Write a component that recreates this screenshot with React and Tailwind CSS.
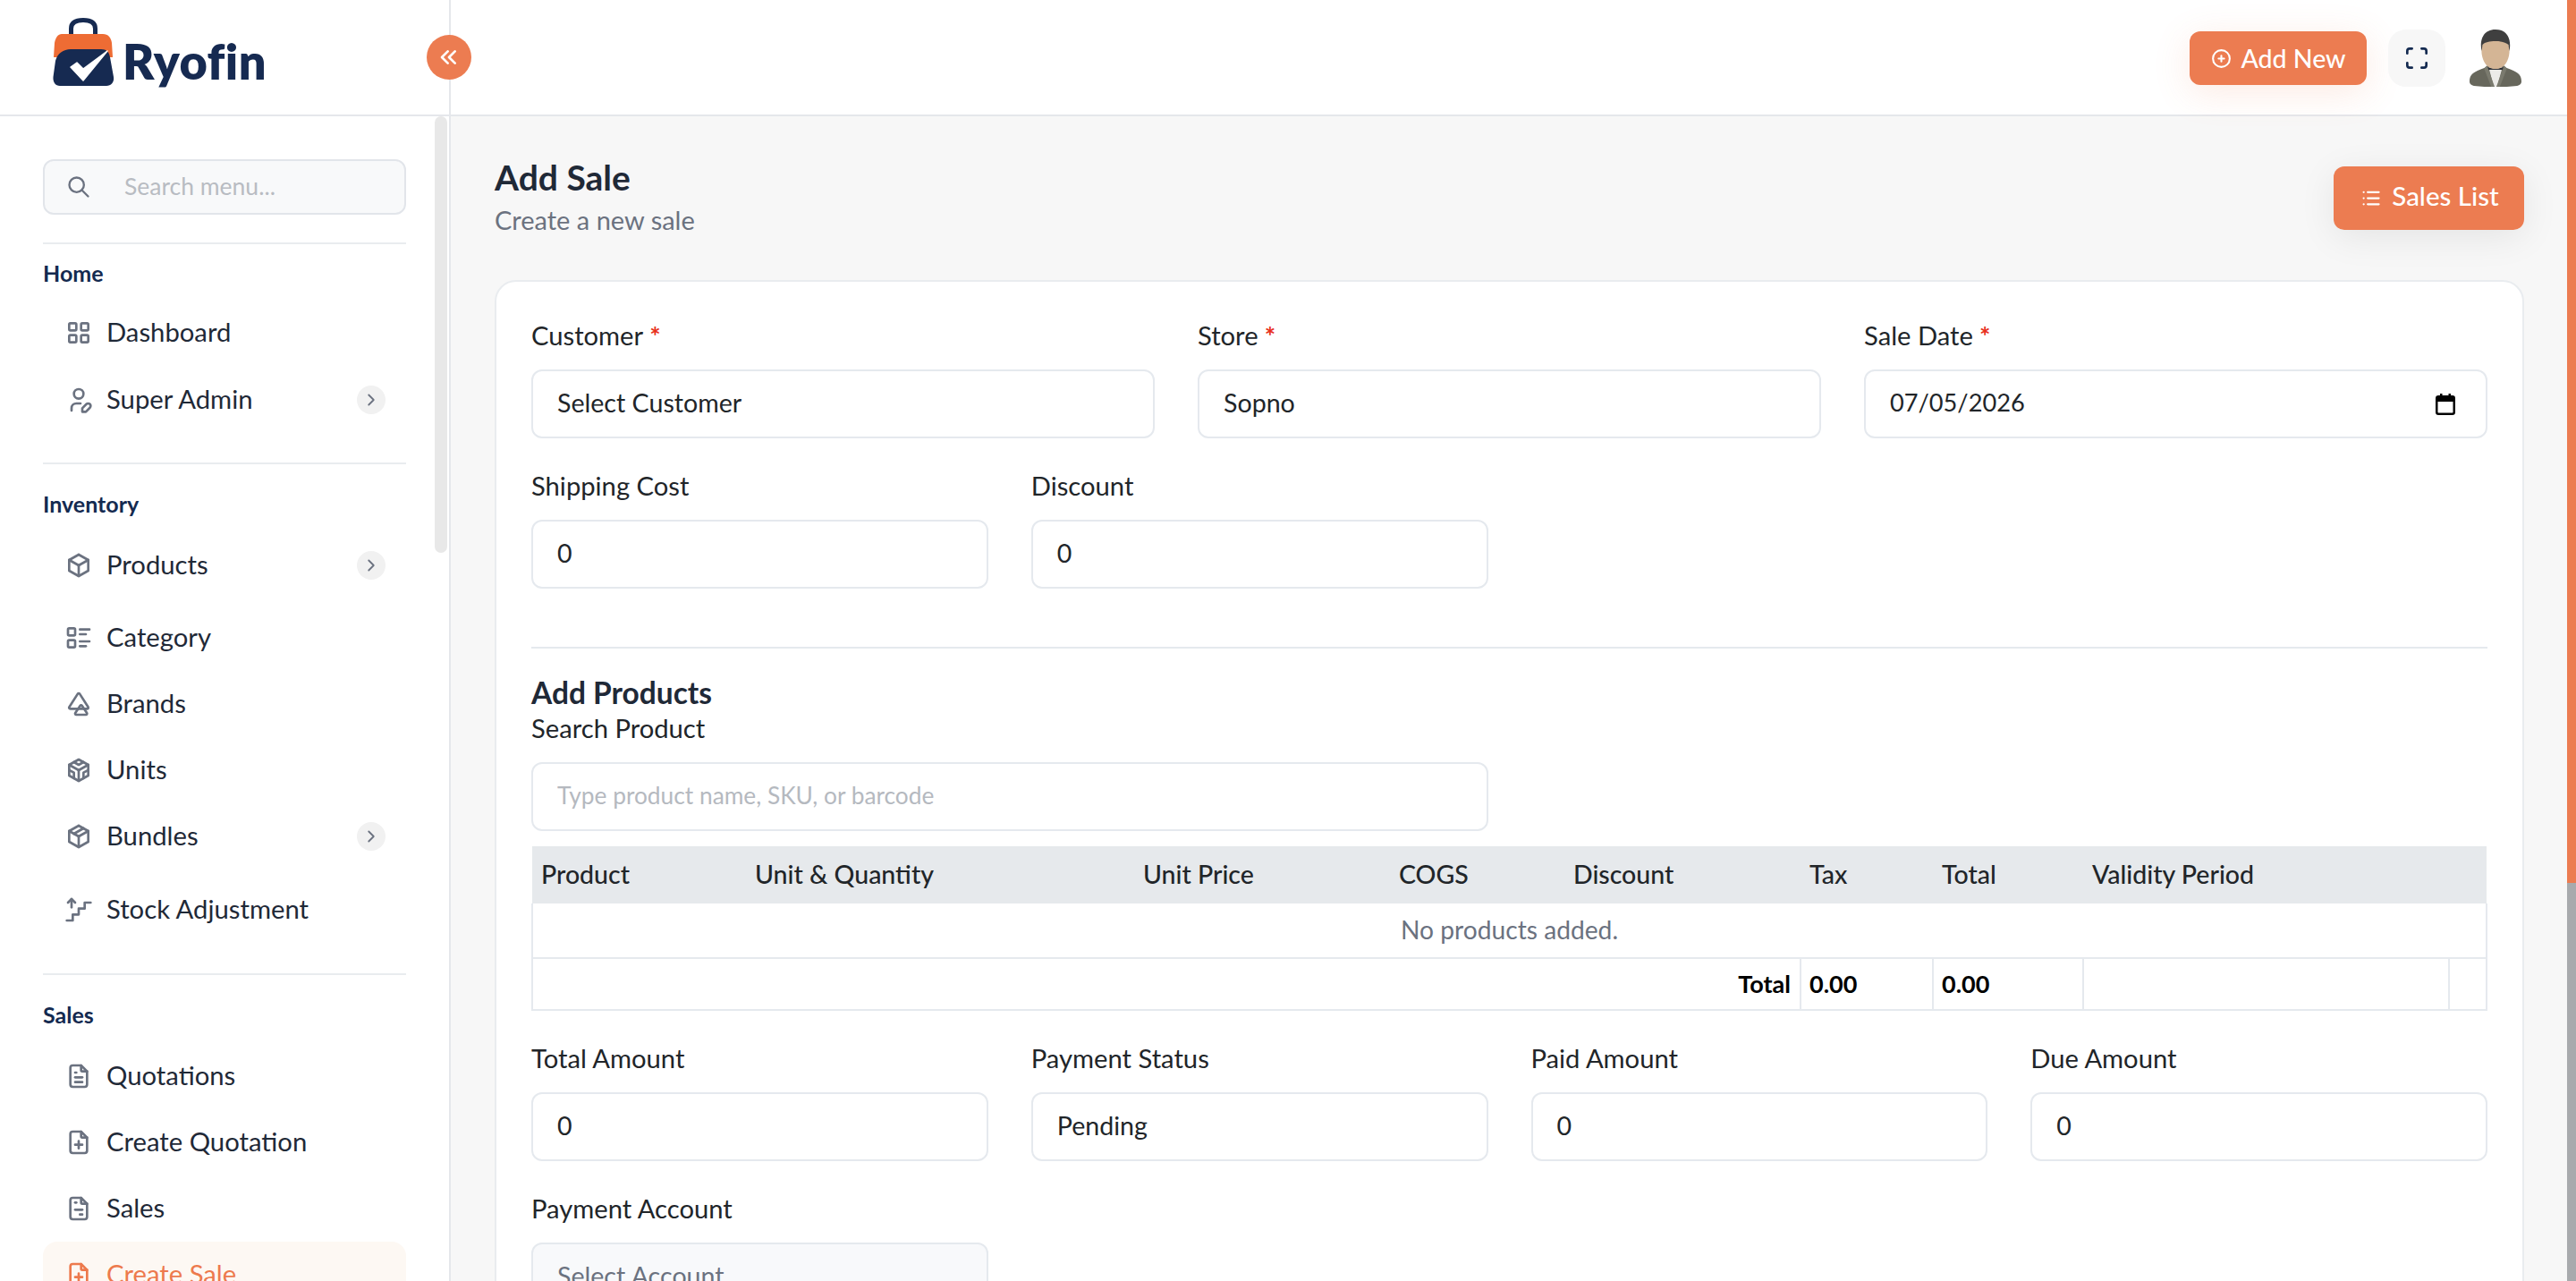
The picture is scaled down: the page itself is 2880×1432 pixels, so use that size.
import React from "react";
import {
  TbLayoutGrid, TbUserEdit, TbBox, TbListDetails, TbTriangles, TbBrandCodesandbox, TbPackage, TbStairsUp,
  TbFileText, TbFilePlus, TbFileInvoice, TbSearch, TbChevronRight, TbCirclePlus, TbList, TbMaximize, TbChevronsLeft,
} from "react-icons/tb";

function Logo() {
  return (
    <div className="flex items-start">
      <svg width="69" height="77" viewBox="0 0 69 77" className="block">
        <path d="M20.5 23V12C20.5 5 26 2.5 34 2.5C42 2.5 47.5 5 47.5 12V23" fill="none" stroke="#162a51" strokeWidth="5" />
        <path d="M10 18H56C62 18 65 22 66 28L67 44H1L2 28C3 22 6 18 10 18Z" fill="#ee6c34" />
        <path d="M0.5 66L3 48C5 40 12 35 20 35H54C60 35 63 38 64 44L68 66C69 72 65 76 60 76H8C3 76 0 72 0.5 66Z" fill="#162a51" />
        <path d="M20 55L27 50L34 57L61 37L34 70Z" fill="#fff" stroke="#fff" strokeWidth="1.5" strokeLinejoin="round" />
      </svg>
      <span className="ml-[9px] mt-[19px] text-[54px] leading-[60px] font-extrabold tracking-[0.5px] text-[#162a51]">Ryofin</span>
    </div>
  );
}

function Avatar() {
  return (
    <svg width="60" height="64" viewBox="0 0 62 64" preserveAspectRatio="none" className="block">
      <path d="M1 58C1 50 6 47 18 43L24 39H38L44 43C56 47 61 50 61 58C61 61 59 62 56 63L44 64H18L6 63C3 62 1 61 1 58Z" fill="#67675c" />
      <path d="M23 42H39L33 64H29Z" fill="#ecebe8" />
      <path d="M22 42L30 44H32L40 42V45H22Z" fill="#2f3238" />
      <path d="M21 40L30 64H26L18 44Z" fill="#7a7a6e" />
      <path d="M41 40L32 64H36L44 44Z" fill="#7a7a6e" />
      <path d="M15 20C15 9 47 9 47 20C48 30 44 44 31 44C18 44 14 30 15 20Z" fill="#d4b595" />
      <path d="M15 24C13 16 14 0 31 0C48 0 49 16 47 24L46 17C42 14 38 13 31 13C24 13 19 14 16 17Z" fill="#3f3f3f" />
    </svg>
  );
}

function CalendarIcon() {
  return (
    <svg width="22" height="24" viewBox="0 0 22 24" className="block shrink-0">
      <rect x="1.25" y="3.25" width="19.5" height="19.5" rx="2" fill="none" stroke="#000" strokeWidth="2.5" />
      <rect x="1" y="3" width="20" height="6" fill="#000" />
      <rect x="5" y="0" width="2.5" height="4" fill="#000" />
      <rect x="14.5" y="0" width="2.5" height="4" fill="#000" />
    </svg>
  );
}

function SideItem({ icon: Icon, label, chevron, active }) {
  return (
    <div className={`flex h-[74px] items-center rounded-[16px] pl-[24px] pr-[23px] text-[29.25px] ${active ? "bg-[#fdf8f3] text-[#ed7a4d]" : "text-[#1f2937]"}`}>
      <Icon className={`h-[32px] w-[32px] shrink-0 ${active ? "text-[#ed7a4d]" : "text-[#6b7280]"}`} />
      <span className="ml-[15px] pb-[2px]">{label}</span>
      {chevron && (
        <span className="ml-auto flex h-[32px] w-[32px] items-center justify-center rounded-full bg-[#f1f1f1]">
          <TbChevronRight className="h-[22px] w-[22px] text-[#6b7280]" />
        </span>
      )}
    </div>
  );
}

function Section({ title, first, children }) {
  return (
    <div className="border-t-2 border-[#e9ecef]">
      <div className={`${first ? "pt-[18px] pb-[16px]" : "pt-[30px] pb-[18px]"} text-[25px] leading-[28px] font-bold text-[#142a50]`}>{title}</div>
      {children}
    </div>
  );
}

function Sidebar() {
  return (
    <aside className="relative z-20 flex w-[504px] shrink-0 flex-col border-r-2 border-[#e5e7eb] bg-white">
      <div className="flex h-[130px] shrink-0 items-start border-b-2 border-[#e5e7eb] pl-[59px] pt-[20px]">
        <Logo />
      </div>
      <button className="absolute left-[477px] top-[39px] z-10 flex h-[50px] w-[50px] items-center justify-center rounded-full bg-[#ec7c51] text-white">
        <TbChevronsLeft className="h-[32px] w-[32px]" />
      </button>
      <div className="relative flex-1 overflow-hidden pl-[48px] pr-[48px] pt-[48px]">
        <div className="absolute right-[2px] top-0 h-[488px] w-[14px] rounded-[7px] bg-[#e8e8e8]" />
        <div className="mb-[31px] flex h-[62px] items-center rounded-[12px] border-2 border-[#e2e5ea] bg-[#f8f9fa] pl-[24px]">
          <TbSearch className="h-[28px] w-[28px] text-[#6b7280]" />
          <span className="ml-[37px] text-[26.5px] text-[#b8bcc2]">Search menu...</span>
        </div>
        <Section title="Home" first>
          <div className="mb-[1px]"><SideItem icon={TbLayoutGrid} label="Dashboard" /></div>
          <div className="mb-[33px]"><SideItem icon={TbUserEdit} label="Super Admin" chevron /></div>
        </Section>
        <Section title="Inventory">
          <div className="mb-[7px]"><SideItem icon={TbBox} label="Products" chevron /></div>
          <SideItem icon={TbListDetails} label="Category" />
          <SideItem icon={TbTriangles} label="Brands" />
          <SideItem icon={TbBrandCodesandbox} label="Units" />
          <div className="mb-[8px]"><SideItem icon={TbPackage} label="Bundles" chevron /></div>
          <div className="mb-[34px]"><SideItem icon={TbStairsUp} label="Stock Adjustment" /></div>
        </Section>
        <Section title="Sales">
          <SideItem icon={TbFileText} label="Quotations" />
          <SideItem icon={TbFilePlus} label="Create Quotation" />
          <SideItem icon={TbFileInvoice} label="Sales" />
          <SideItem icon={TbFilePlus} label="Create Sale" active />
        </Section>
      </div>
    </aside>
  );
}

function Label({ children, required }) {
  return (
    <label className="block h-[38px] text-[29.2px] leading-[36px] text-[#212529]">
      {children}
      {required && <span className="font-bold text-[#e8301c]"> *</span>}
    </label>
  );
}

function Field({ label, value, required, placeholder, disabled, right, span, valueClass }) {
  const tone = placeholder ? "text-[#b5b9bf]" : disabled ? "text-[#6b7280]" : "text-[#212529]";
  return (
    <div className={span}>
      <Label required={required}>{label}</Label>
      <div className={`mt-[18px] flex h-[77px] items-center justify-between rounded-[12px] border-2 border-[#e5e9ee] px-[27px] ${disabled ? "bg-[#f8f9fb]" : "bg-white"} ${tone}`}>
        <span className={`pb-[2px] ${valueClass || (placeholder ? "text-[26.3px]" : "text-[28.6px]")}`}>{value}</span>
        {right}
      </div>
    </div>
  );
}

function ProductsTable() {
  const head = [
    ["Product", "w-[239px]"], ["Unit & Quantity", "w-[434px]"], ["Unit Price", "w-[286px]"], ["COGS", "w-[195px]"],
    ["Discount", "w-[264px]"], ["Tax", "w-[148px]"], ["Total", "w-[168px]"], ["Validity Period", "w-[409px]"], ["", "w-[42px]"],
  ];
  return (
    <table className="mt-[17px] w-[2186px] table-fixed border-collapse text-[28.5px] text-[#212529]">
      <thead>
        <tr className="h-[64px] bg-[#e6e9ec]">
          {head.map(([t, w], i) => (
            <th key={i} className={`${w} px-[10px] pb-[1px] text-left font-medium`}>{t}</th>
          ))}
        </tr>
      </thead>
      <tbody>
        <tr className="h-[61px] border-x-2 border-b-2 border-[#e5e9ee]">
          <td colSpan={9} className="pb-[2px] text-center text-[28.2px] text-[#6b7280]">No products added.</td>
        </tr>
        <tr className="h-[58px] border-x-2 border-b-2 border-[#e5e9ee] font-bold text-[#000]">
          <td colSpan={5} className="px-[10px] text-right text-[27px]">Total</td>
          <td className="border-l-2 border-[#e5e9ee] px-[9px] text-[27px]">0.00</td>
          <td className="border-l-2 border-[#e5e9ee] px-[9px] text-[27px]">0.00</td>
          <td className="border-l-2 border-[#e5e9ee]"></td>
          <td className="border-l-2 border-[#e5e9ee]"></td>
        </tr>
      </tbody>
    </table>
  );
}

function Main() {
  return (
    <main className="relative flex min-w-0 flex-1 flex-col">
      <header className="relative z-10 flex h-[130px] shrink-0 items-start justify-end border-b-2 border-[#e5e7eb] bg-white pr-[50px] pt-[33px]">
        <button className="mt-[2px] flex h-[60px] w-[198px] items-center justify-center rounded-[12px] bg-[#ec7c51] text-[28.5px] font-medium text-white shadow-[0_8px_40px_rgba(236,124,81,0.16)]">
          <TbCirclePlus className="mr-[9px] h-[25px] w-[25px]" />
          Add New
        </button>
        <div className="ml-[24px] flex h-[64px] w-[64px] items-center justify-center rounded-[20px] bg-[#f7f7f7]">
          <TbMaximize className="h-[32px] w-[32px] text-[#142a50]" />
        </div>
        <div className="ml-[26px]"><Avatar /></div>
      </header>
      <div className="flex min-h-0 flex-1 overflow-hidden bg-[#f7f7f7]">
        <div className="min-w-0 flex-1 pl-[49px] pr-[48px]">
          <div className="flex items-start justify-between pt-[46px]">
            <div>
              <h1 className="text-[39px] leading-[44px] font-bold text-[#1f2937]">Add Sale</h1>
              <p className="mt-[6px] text-[29px] leading-[40px] text-[#6b7280]">Create a new sale</p>
            </div>
            <button className="mt-[10px] flex h-[71px] w-[213px] items-center justify-center rounded-[12px] bg-[#ec7c51] pb-[4px] text-[29.5px] font-medium text-white shadow-[0_8px_40px_rgba(0,0,0,0.08)]">
              <TbList className="mr-[10px] mt-[3px] h-[27px] w-[27px]" />
              Sales List
            </button>
          </div>
          <div className="mt-[47px] rounded-[24px] border-2 border-[#e9ecef] bg-white px-[39px] pt-[42px] pb-[60px]">
            <div className="grid grid-cols-3 gap-x-[48px]">
              <Field label="Customer" value="Select Customer" required />
              <Field label="Store" value="Sopno" required />
              <Field label="Sale Date" value="07/05/2026" required valueClass="text-[27.2px]" right={<span className="mr-[7px]"><CalendarIcon /></span>} />
            </div>
            <div className="mt-[35px] grid grid-cols-4 gap-x-[48px]">
              <Field label="Shipping Cost" value="0" />
              <Field label="Discount" value="0" />
            </div>
            <div className="mt-[65px] border-t-2 border-[#e5e9ee]" />
            <h2 className="mt-[29px] text-[33.5px] leading-[40px] font-bold text-[#1f2937]">Add Products</h2>
            <div className="mt-[2px] grid grid-cols-4 gap-x-[48px]">
              <Field label="Search Product" value="Type product name, SKU, or barcode" placeholder span="col-span-2" />
            </div>
            <ProductsTable />
            <div className="mt-[35px] grid grid-cols-4 gap-x-[48px]">
              <Field label="Total Amount" value="0" />
              <Field label="Payment Status" value="Pending" />
              <Field label="Paid Amount" value="0" />
              <Field label="Due Amount" value="0" />
            </div>
            <div className="mt-[35px] grid grid-cols-4 gap-x-[48px]">
              <Field label="Payment Account" value="Select Account" disabled />
            </div>
          </div>
        </div>
      </div>
    </main>
  );
}

export default function App() {
  return (
    <div className="flex h-screen overflow-hidden bg-white font-['Lato','Noto_Sans',sans-serif]">
      <Sidebar />
      <Main />
      <div className="flex w-[10px] shrink-0 flex-col">
        <div className="h-[987px] bg-[#ec7c51]" />
        <div className="flex-1 bg-[#a8aaad]" />
      </div>
    </div>
  );
}
